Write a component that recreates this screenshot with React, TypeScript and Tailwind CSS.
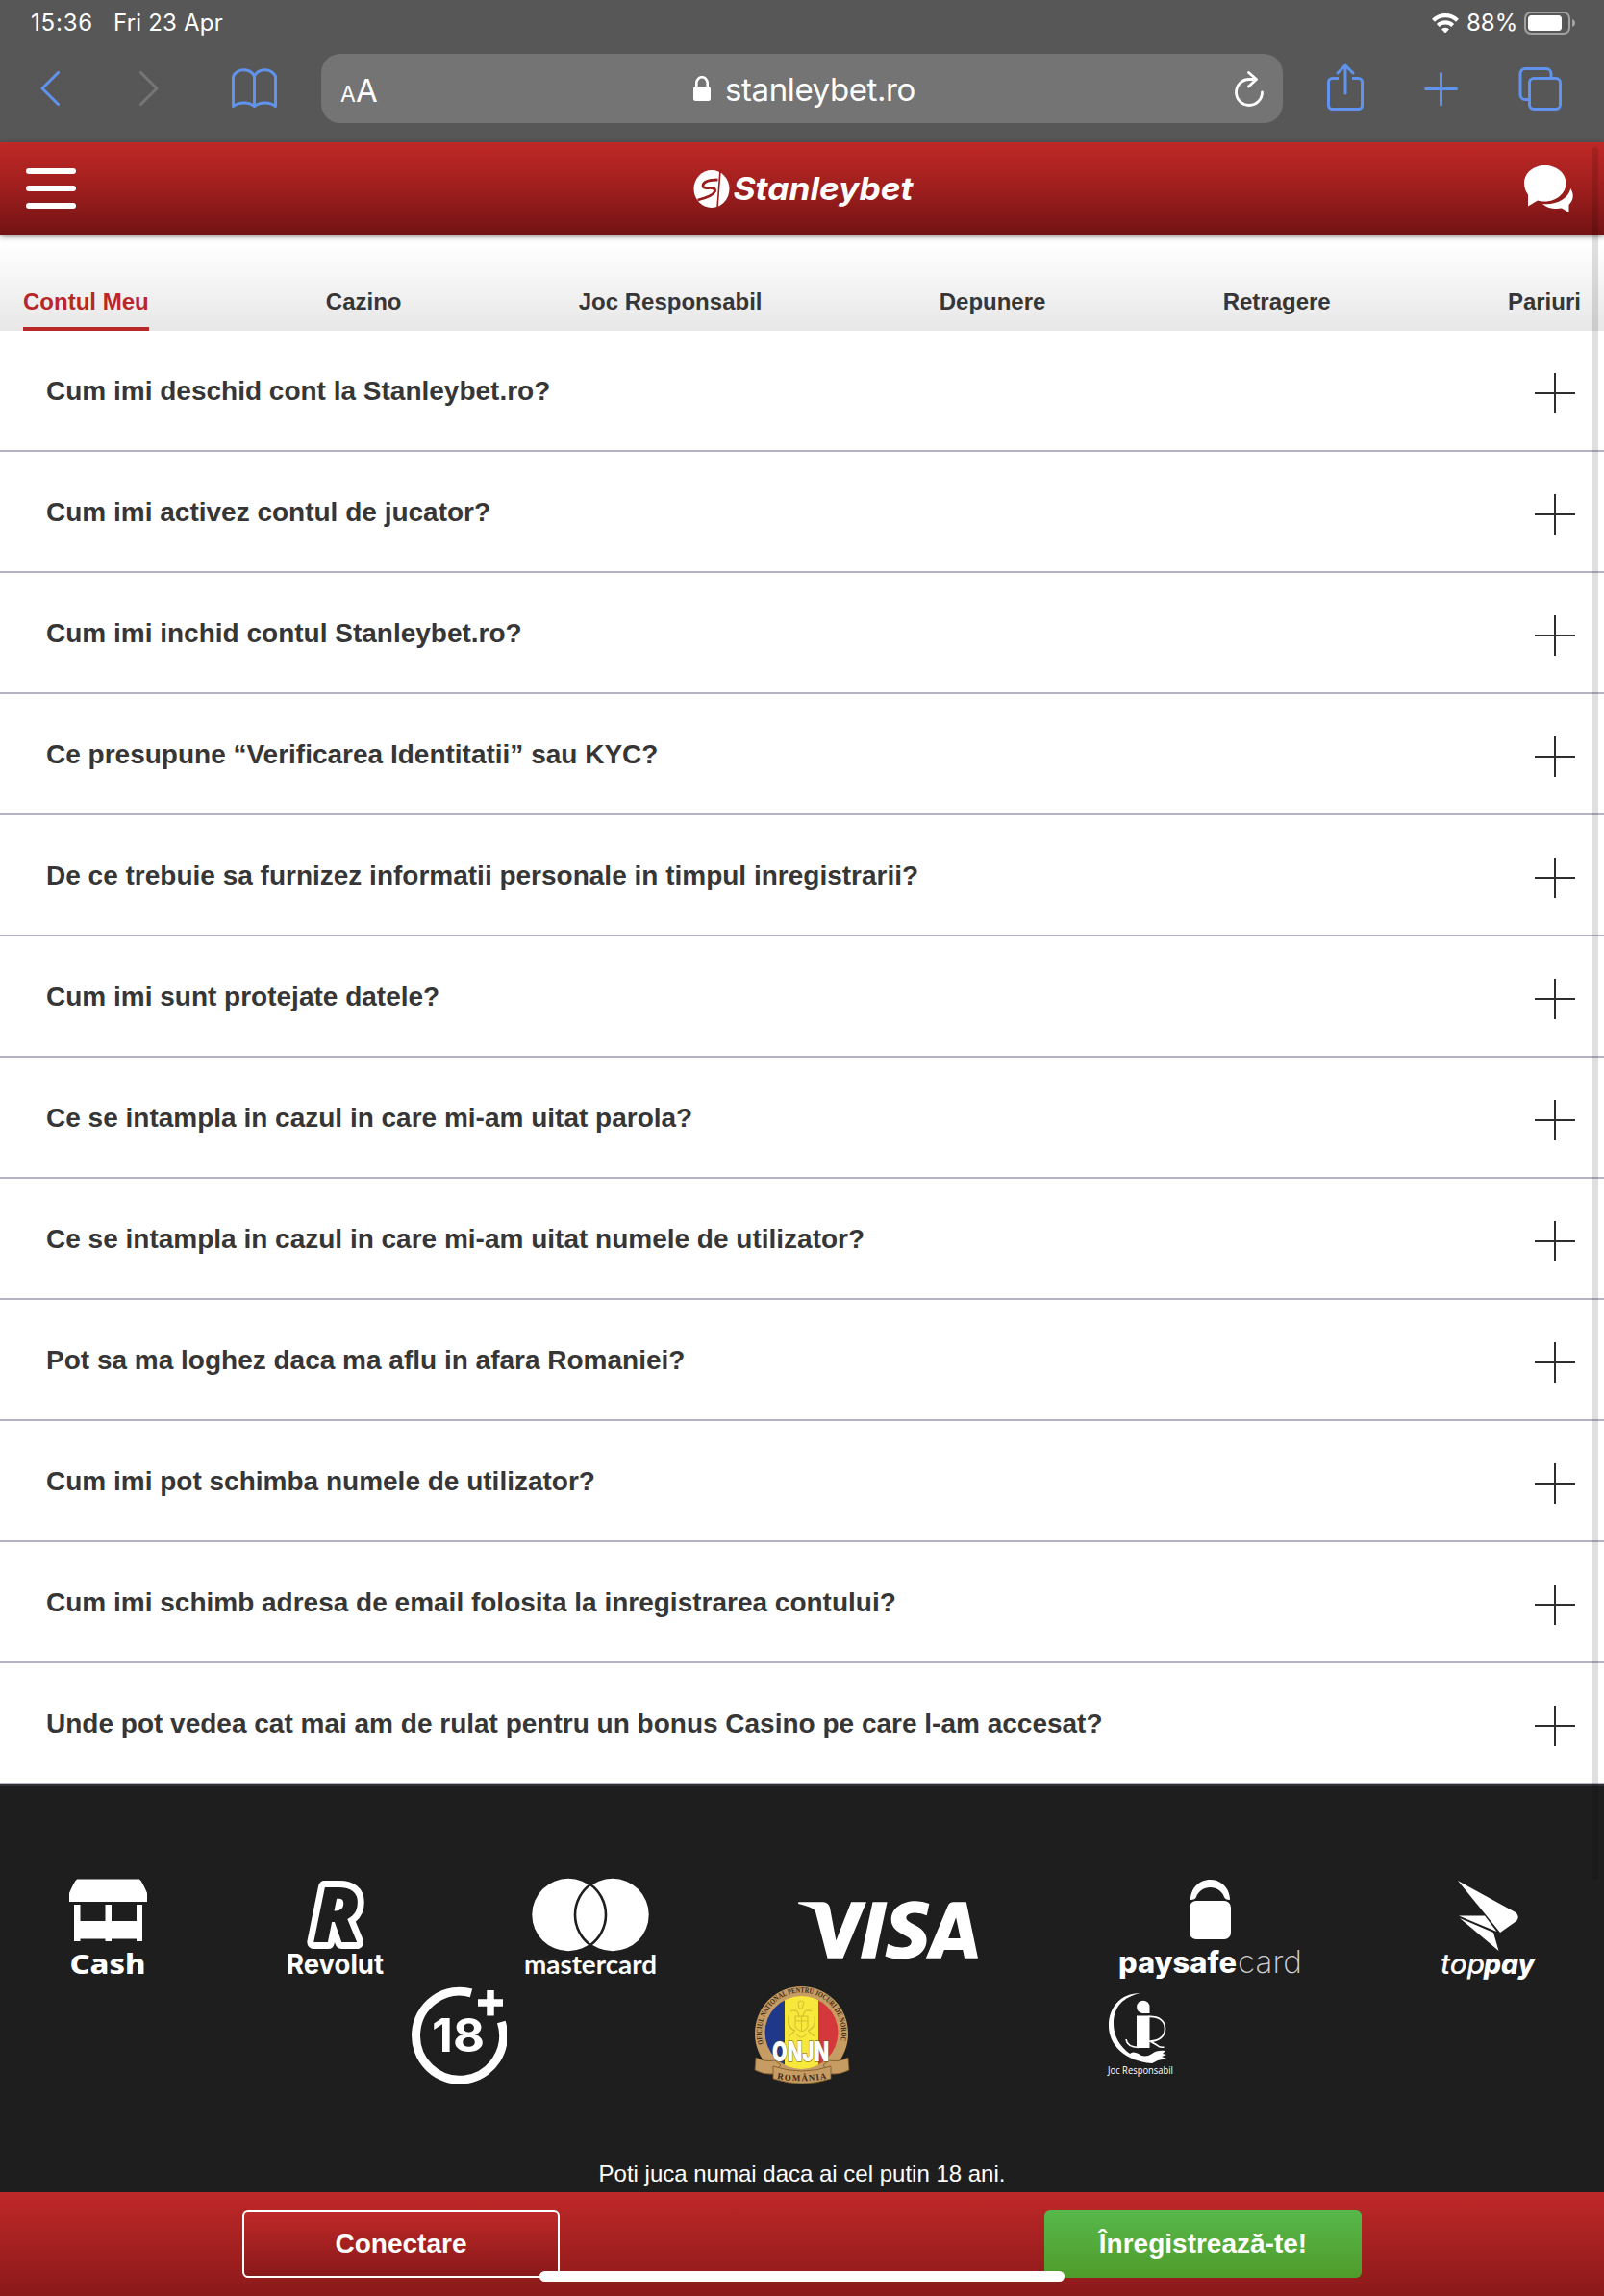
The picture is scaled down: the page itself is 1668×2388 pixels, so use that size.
import { SiVisa } from "react-icons/si";

const tabs = ["Contul Meu", "Cazino", "Joc Responsabil", "Depunere", "Retragere", "Pariuri"];

const questions = [
  "Cum imi deschid cont la Stanleybet.ro?",
  "Cum imi activez contul de jucator?",
  "Cum imi inchid contul Stanleybet.ro?",
  "Ce presupune “Verificarea Identitatii” sau KYC?",
  "De ce trebuie sa furnizez informatii personale in timpul inregistrarii?",
  "Cum imi sunt protejate datele?",
  "Ce se intampla in cazul in care mi-am uitat parola?",
  "Ce se intampla in cazul in care mi-am uitat numele de utilizator?",
  "Pot sa ma loghez daca ma aflu in afara Romaniei?",
  "Cum imi pot schimba numele de utilizator?",
  "Cum imi schimb adresa de email folosita la inregistrarea contului?",
  "Unde pot vedea cat mai am de rulat pentru un bonus Casino pe care l-am accesat?",
];

function StatusBar() {
  return (
    <div className="flex h-12 items-center pl-8 pr-[30px] text-[24px] leading-none text-white">
      <span className="w-[86px] tracking-[0.8px]">15:36</span>
      <span className="tracking-[0.2px]">Fri 23 Apr</span>
      <svg className="ml-auto h-5 w-7" viewBox="0 0 28 20" fill="none" stroke="white" strokeWidth="4.2">
        <path d="M1.5 7.2a18 18 0 0 1 25 0" />
        <path d="M6.3 12.400a11.2 11.2 0 0 1 15.4 0" />
        <path d="M14 20.500l-4-4.2a5.8 5.8 0 0 1 8 0z" fill="white" stroke="none" />
      </svg>
      <span className="ml-2 w-[60px]">88%</span>
      <svg className="h-6 w-[53px]" viewBox="0 0 53 24">
        <rect x="1" y="1" width="46" height="22" rx="6" fill="none" stroke="#a2a2a2" strokeWidth="2" />
        <rect x="4" y="4" width="35" height="16" rx="3.5" fill="white" />
        <path d="M50 8q3.4 1.2 3 4 .4 2.8-3 4z" fill="#a2a2a2" />
      </svg>
    </div>
  );
}

function Toolbar() {
  return (
    <div className="flex h-[100px] items-start pl-[42px] pr-11 pt-2 text-[#5f93ee]">
      <svg className="mt-[18px] h-9 w-5" viewBox="0 0 20 36" fill="none" stroke="currentColor" strokeWidth="3" strokeLinecap="round" strokeLinejoin="round">
        <path d="M18.5 1.5L2 18l16.5 16.5" />
      </svg>
      <svg className="ml-[83px] mt-[18px] h-9 w-5 text-[#767676]" viewBox="0 0 20 36" fill="none" stroke="currentColor" strokeWidth="3" strokeLinecap="round" strokeLinejoin="round">
        <path d="M1.5 1.5L18 18 1.5 34.5" />
      </svg>
      <svg className="ml-[76px] mt-[15px] h-[42px] w-[47px]" viewBox="0 0 47 42" fill="none" stroke="currentColor" strokeWidth="3" strokeLinejoin="round">
        <path d="M1.5 39.5V8.5Q5 1.7 12.5 1.7T23.5 8Q27 1.7 34.5 1.7T45.500 8.500V39.500Q41 36 34.500 36T23.500 39.500Q19 36 12.500 36T1.500 39.500Z" />
        <path d="M23.500 7.500V39.500" />
      </svg>
      <div className="ml-[46px] flex h-[72px] w-[1000px] items-center rounded-[20px] bg-[#747474] pl-5 pr-5 text-white">
        <div className="flex w-10 items-baseline pt-1 leading-none">
          <span className="text-[23px]">A</span>
          <span className="text-[33px]">A</span>
        </div>
        <svg className="ml-[327px] h-[26px] w-[18px]" viewBox="0 0 18 26">
          <rect x="0" y="11" width="18" height="15" rx="2.500" fill="white" />
          <path d="M3.300 12V7.500a5.700 6.300 0 0 1 11.400 0V12" fill="none" stroke="white" strokeWidth="2.600" />
        </svg>
        <span className="ml-[15px] w-[204px] whitespace-nowrap pt-0.5 text-[33px] leading-none tracking-[-0.400px]">stanleybet.ro</span>
        <svg className="ml-auto h-[37px] w-[30px]" viewBox="0 0 30 37" fill="none" stroke="white" strokeWidth="2.800" strokeLinecap="round" strokeLinejoin="round">
          <path d="M28.500 22A13.500 13.500 0 1 1 15 8.500H22" />
          <path d="M14.500 1.500l8 7-8 7.500" />
        </svg>
      </div>
      <svg className="ml-[46px] mt-[10px] h-[49px] w-[38px]" viewBox="0 0 38 49" fill="none" stroke="currentColor" strokeWidth="3" strokeLinecap="round" strokeLinejoin="round">
        <path d="M12 15.500H5.500a4 4 0 0 0-4 4V43.500a4 4 0 0 0 4 4H32.500a4 4 0 0 0 4-4V19.500a4 4 0 0 0-4-4H26" strokeLinecap="butt" />
        <path d="M19 31V2M11 10l8-8 8 8" />
      </svg>
      <svg className="ml-[63px] mt-[19px] h-9 w-[35px]" viewBox="0 0 35 36" fill="none" stroke="currentColor" strokeWidth="3" strokeLinecap="round">
        <path d="M17.500 1.500V34M1.500 17.500H33.500" />
      </svg>
      <svg className="ml-auto mt-[14px] h-[45px] w-[45px]" viewBox="0 0 45 45" fill="none" stroke="currentColor" strokeWidth="3">
        <rect x="11.500" y="11.500" width="32" height="32" rx="4.500" />
        <path d="M11.500 33.500H7a5 5 0 0 1-5-5V6.500a5 5 0 0 1 5-5H29a5 5 0 0 1 5 5V11.500" />
      </svg>
    </div>
  );
}

function SiteHeader() {
  return (
    <header className="relative z-10 flex h-24 items-center justify-between bg-linear-to-b from-[#bf2926] via-[#9f1e1e] to-[#731213] pl-[27px] pr-8 shadow-[0_2px_6px_rgba(0,0,0,0.4)]">
      <div className="flex w-[52px] flex-col gap-3">
        <span className="h-1.5 rounded-full bg-white" />
        <span className="h-1.5 rounded-full bg-white" />
        <span className="h-1.5 rounded-full bg-white" />
      </div>
      <svg className="h-12 w-[230px] overflow-visible" viewBox="717.500 172 230 48">
        <ellipse cx="740.500" cy="196.500" rx="18.500" ry="19.500" fill="white" />
        <path d="M749.500 177L746.500 216" stroke="#961b1c" strokeWidth="1.600" />
        <path d="M747 187Q733 187 731.500 192.500 731 196 737 195.500 745 195 744 199 742 204 726 208" fill="none" stroke="#981c1c" strokeWidth="2.800" />
        <text x="763" y="207.500" fontFamily="Inter" fontWeight="700" fontStyle="italic" fontSize="33" textLength="187" lengthAdjust="spacingAndGlyphs" fill="white">Stanleybet</text>
      </svg>
      <svg className="h-[50px] w-[52px]" viewBox="0 0 52 50" fill="white">
        <path d="M22.500 1C34.500 1 44.500 9 44.500 19.500S34.500 38.500 22.500 38.500C19.500 38.500 17 38.200 15 37.500L5 43.500V31.500C2.500 28 1 24 1 19.500 1 9 10.500 1 22.500 1Z" />
        <path d="M49.300 25C53 31 52.500 37 47.500 42V50L40 45.500C32 47 24 45 20 41 34 42.500 47 36 49.300 25Z" />
      </svg>
    </header>
  );
}

function Tabs() {
  return (
    <nav className="flex h-[100px] items-end justify-between bg-linear-to-b from-white from-10% to-[#e7e7e7] px-6 text-[24px] font-bold leading-[28px] text-[#363636]">
      {tabs.map((tab, i) => (
        <span key={tab} className={i === 0 ? "border-b-4 border-[#b92829] pb-3 text-[#b92829]" : "pb-4"}>
          {tab}
        </span>
      ))}
    </nav>
  );
}

function PlusIcon() {
  return (
    <svg className="mt-1.5 h-[42px] w-[42px]" viewBox="0 0 42 42" stroke="#2e2e2e" strokeWidth="2">
      <path d="M21 0V42M0 21H42" />
    </svg>
  );
}

function CashLogo() {
  return (
    <svg className="h-28 w-[81px] overflow-visible" viewBox="72 1954 81 112" fill="white">
      <path d="M80 1954.500H145Q148 1957 153 1969V1978H72V1969Q77 1957 80 1954.500Z" />
      <path d="M77 1981h6.500v17h26v-17h6.500v17h26v-17h6v38h-6v-2.500h-26v2.500h-6.500v-2.500h-26v2.500h-6.500z" />
      <text x="72.500" y="2053" fontFamily="Noto Sans" fontWeight="800" fontSize="28.500" textLength="79" lengthAdjust="spacingAndGlyphs">Cash</text>
    </svg>
  );
}

function RevolutLogo() {
  return (
    <svg className="h-28 w-[99px] overflow-visible" viewBox="300 1954 99 112" fill="white">
      <text x="325" y="2020" fontFamily="Open Sans" fontWeight="800" fontStyle="italic" fontSize="79" textLength="50" lengthAdjust="spacingAndGlyphs" fill="#1e1e1e" stroke="white" strokeWidth="14" strokeLinejoin="round" paintOrder="stroke">R</text>
      <text x="298" y="2053" fontFamily="Inter" fontWeight="700" fontSize="29" textLength="101" lengthAdjust="spacingAndGlyphs">Revolut</text>
    </svg>
  );
}

function MastercardLogo() {
  return (
    <svg className="h-28 w-[136px] overflow-visible" viewBox="546 1954 136 112" fill="white">
      <circle cx="591" cy="1991.500" r="37.700" />
      <circle cx="637" cy="1991.500" r="37.700" />
      <path d="M614 1960a39 39 0 0 1 0 63a39 39 0 0 1 0-63z" fill="white" stroke="#1e1e1e" strokeWidth="2.600" />
      <text x="545" y="2053" fontFamily="Lato" fontWeight="700" fontSize="26" textLength="138" lengthAdjust="spacingAndGlyphs">mastercard</text>
    </svg>
  );
}

function PaysafeLogo() {
  return (
    <svg className="h-28 w-[188px] overflow-visible" viewBox="1163 1954 188 112" fill="white">
      <rect x="1236" y="1977" width="43" height="40" rx="7" />
      <path d="M1237 1976C1237 1964 1246 1955 1257.500 1955S1278 1964 1278 1976Q1273 1976 1272 1973C1270 1967 1264 1963 1257.500 1963S1245 1967 1243 1973Q1242 1976 1237 1976Z" />
      <text x="1162" y="2052" fontFamily="Inter" fontWeight="800" fontSize="31" textLength="123" lengthAdjust="spacingAndGlyphs">paysafe</text>
      <text x="1286" y="2052" fontFamily="Inter" fontWeight="200" fontSize="33" textLength="67" lengthAdjust="spacingAndGlyphs" fill="#d0d0d0">card</text>
    </svg>
  );
}

function ToppayLogo() {
  return (
    <svg className="h-28 w-[98px] overflow-visible" viewBox="1499 1954 98 112" fill="white">
      <path d="M1516 1956L1576 1989Q1581 1993 1577 1998L1560 2010Z" />
      <path d="M1517 1992.500H1544L1556.500 2009Z" />
      <path d="M1518 1995L1553 2010 1558.500 2029Z" />
      <text x="1498" y="2053" fontFamily="Inter" fontWeight="500" fontStyle="italic" fontSize="29" textLength="46" lengthAdjust="spacingAndGlyphs">top</text>
      <text x="1543" y="2053" fontFamily="Inter" fontWeight="800" fontStyle="italic" fontSize="29" textLength="53" lengthAdjust="spacingAndGlyphs">pay</text>
    </svg>
  );
}

function AgeBadge() {
  return (
    <svg className="h-[101px] w-[100px]" viewBox="428 2066 100 101">
      <path d="M491 2072.800A45.500 46 0 1 0 522.300 2103" fill="none" stroke="white" strokeWidth="9" />
      <path d="M511 2070V2096.500M498 2083H524" stroke="white" strokeWidth="7.500" />
      <text x="450" y="2134" fontFamily="Inter" fontWeight="700" fontSize="48" textLength="55" lengthAdjust="spacingAndGlyphs" fill="white">18</text>
    </svg>
  );
}

function OnjnBadge() {
  return (
    <svg className="h-[101px] w-[100px] overflow-visible" viewBox="0 0 100 101">
      <defs>
        <clipPath id="flag"><circle cx="49.500" cy="48" r="38" /></clipPath>
        <path id="ring" d="M9.800 60A41.500 41.500 0 1 1 89.200 60" />
        <path id="ribbon" d="M24 96Q50 100.500 76 96" />
      </defs>
      <ellipse cx="49.500" cy="49" rx="48.500" ry="49" fill="#c69c63" />
      <g clipPath="url(#flag)">
        <path d="M0 0H32V100H0z" fill="#20388a" />
        <path d="M32 0H67V100H32z" fill="#f9e83c" />
        <path d="M67 0H100V100H67z" fill="#d4383a" />
      </g>
      <g fill="none" stroke="#d3c032" strokeWidth="1.100">
        <path d="M46 17q3-4 6 0l-2 6h-3zM38 26q8-4 9 6M60 26q-8-4-9 6M36 31q-2 12 7 15M63 31q2 12-7 15M43 31h13v11q-6 9-13 0zM43 36h13M49.500 31v15M36 52l7-6M63 52l-7-6M44 49q5 8 11 0" />
      </g>
      <text fontFamily="Liberation Serif" fontWeight="700" fontSize="8" fill="#3f2a18">
        <textPath href="#ring" textLength="151" lengthAdjust="spacingAndGlyphs">OFICIUL NATIONAL PENTRU JOCURI DE NOROC</textPath>
      </text>
      <path d="M2 74Q12 79 22 77L28 82 20 91Q10 92 1 87Z" fill="#c69c63" stroke="#7a5728" strokeWidth="0.800" />
      <path d="M98 74Q88 79 78 77L72 82 80 91Q90 92 99 87Z" fill="#c69c63" stroke="#7a5728" strokeWidth="0.800" />
      <path d="M20 83Q50 93 80 83V96Q50 106 20 96Z" fill="#c69c63" stroke="#7a5728" strokeWidth="0.800" />
      <text fontFamily="Liberation Serif" fontWeight="700" fontSize="9" fill="#3f2a18">
        <textPath href="#ribbon" textLength="52" lengthAdjust="spacing">ROMÂNIA</textPath>
      </text>
      <text x="19" y="78" fontFamily="Inter" fontWeight="900" fontSize="29" textLength="59" lengthAdjust="spacingAndGlyphs" fill="white" stroke="#5d511f" strokeWidth="1" paintOrder="stroke">ONJN</text>
    </svg>
  );
}

function ResponsibleLogo() {
  return (
    <svg className="h-[101px] w-[100px]" viewBox="1141 2066 100 101" fill="white">
      <path d="M1186 2073C1165 2073 1153 2088 1153 2107C1153 2127 1170 2144 1198 2146L1204 2143 1213 2141 1208 2139 1213 2137 1209 2136 1212 2133Q1203 2132 1198 2136 1190 2141 1184 2136 1178 2133 1175 2136C1165 2129 1158 2118 1158 2105C1158 2087 1168 2077 1186 2073Z" />
      <path d="M1195.500 2094V2087A6.700 6.700 0 1 0 1188 2094Z" />
      <path d="M1182 2096.500H1195.500V2130H1182Z" />
      <path d="M1171 2121Q1172 2129 1184 2129.500M1194 2097.500C1206 2097 1211.500 2102 1211.500 2110C1211.500 2118 1205 2123 1196 2123L1203 2127Q1206 2130 1210.500 2129" fill="none" stroke="white" strokeWidth="1.700" />
      <text x="1152" y="2157" fontFamily="Open Sans" fontSize="11.500" textLength="68" lengthAdjust="spacingAndGlyphs">Joc Responsabil</text>
    </svg>
  );
}

function Footer() {
  return (
    <footer className="flex h-[424px] flex-col border-t-2 border-[#303035] bg-[#1e1e1e] pt-24 text-white">
      <div className="flex h-28 justify-between pl-[72px] pr-[71px]">
        <CashLogo />
        <RevolutLogo />
        <MastercardLogo />
        <div className="flex h-[107px] w-[187px] items-center justify-center">
          <SiVisa className="h-[187px] w-[187px] shrink-0" />
        </div>
        <PaysafeLogo />
        <ToppayLogo />
      </div>
      <div className="flex justify-center gap-[257px] pr-px">
        <AgeBadge />
        <OnjnBadge />
        <ResponsibleLogo />
      </div>
      <p className="mt-auto pb-[5px] text-center text-[24px] leading-[28px]">Poti juca numai daca ai cel putin 18 ani.</p>
    </footer>
  );
}

export default function App() {
  return (
    <div className="relative h-[2388px] w-[1668px] overflow-hidden bg-white font-['Liberation_Sans',sans-serif]">
      <div className="h-[148px] bg-[#575757] font-[Inter,sans-serif]">
        <StatusBar />
        <Toolbar />
      </div>
      <SiteHeader />
      <Tabs />
      <main>
        {questions.map((q) => (
          <div key={q} className="flex h-[126px] items-center justify-between border-b-2 border-[#b5b2c3] pl-12 pr-[30px] text-[28px] font-bold text-[#363636]">
            <span className="pt-0.5">{q}</span>
            <PlusIcon />
          </div>
        ))}
      </main>
      <Footer />
      <div className="flex h-[108px] items-start justify-center gap-[504px] bg-linear-to-b from-[#c02828] to-[#8b191a] pt-[19px] text-[28px] font-bold text-white">
        <button className="h-[70px] w-[330px] rounded-md border-2 border-white bg-linear-to-b from-[#bf2828] to-[#8a191a]">Conectare</button>
        <button className="h-[70px] w-[330px] rounded-md bg-linear-to-b from-[#57b84a] to-[#4f9c2a]">Înregistrează-te!</button>
      </div>
      <div className="absolute left-[561px] top-[2362px] h-[11px] w-[546px] rounded-full bg-white" />
      <div className="absolute right-1.5 top-[153px] z-20 h-[1802px] w-1.5 rounded-full bg-black/12" />
    </div>
  );
}
